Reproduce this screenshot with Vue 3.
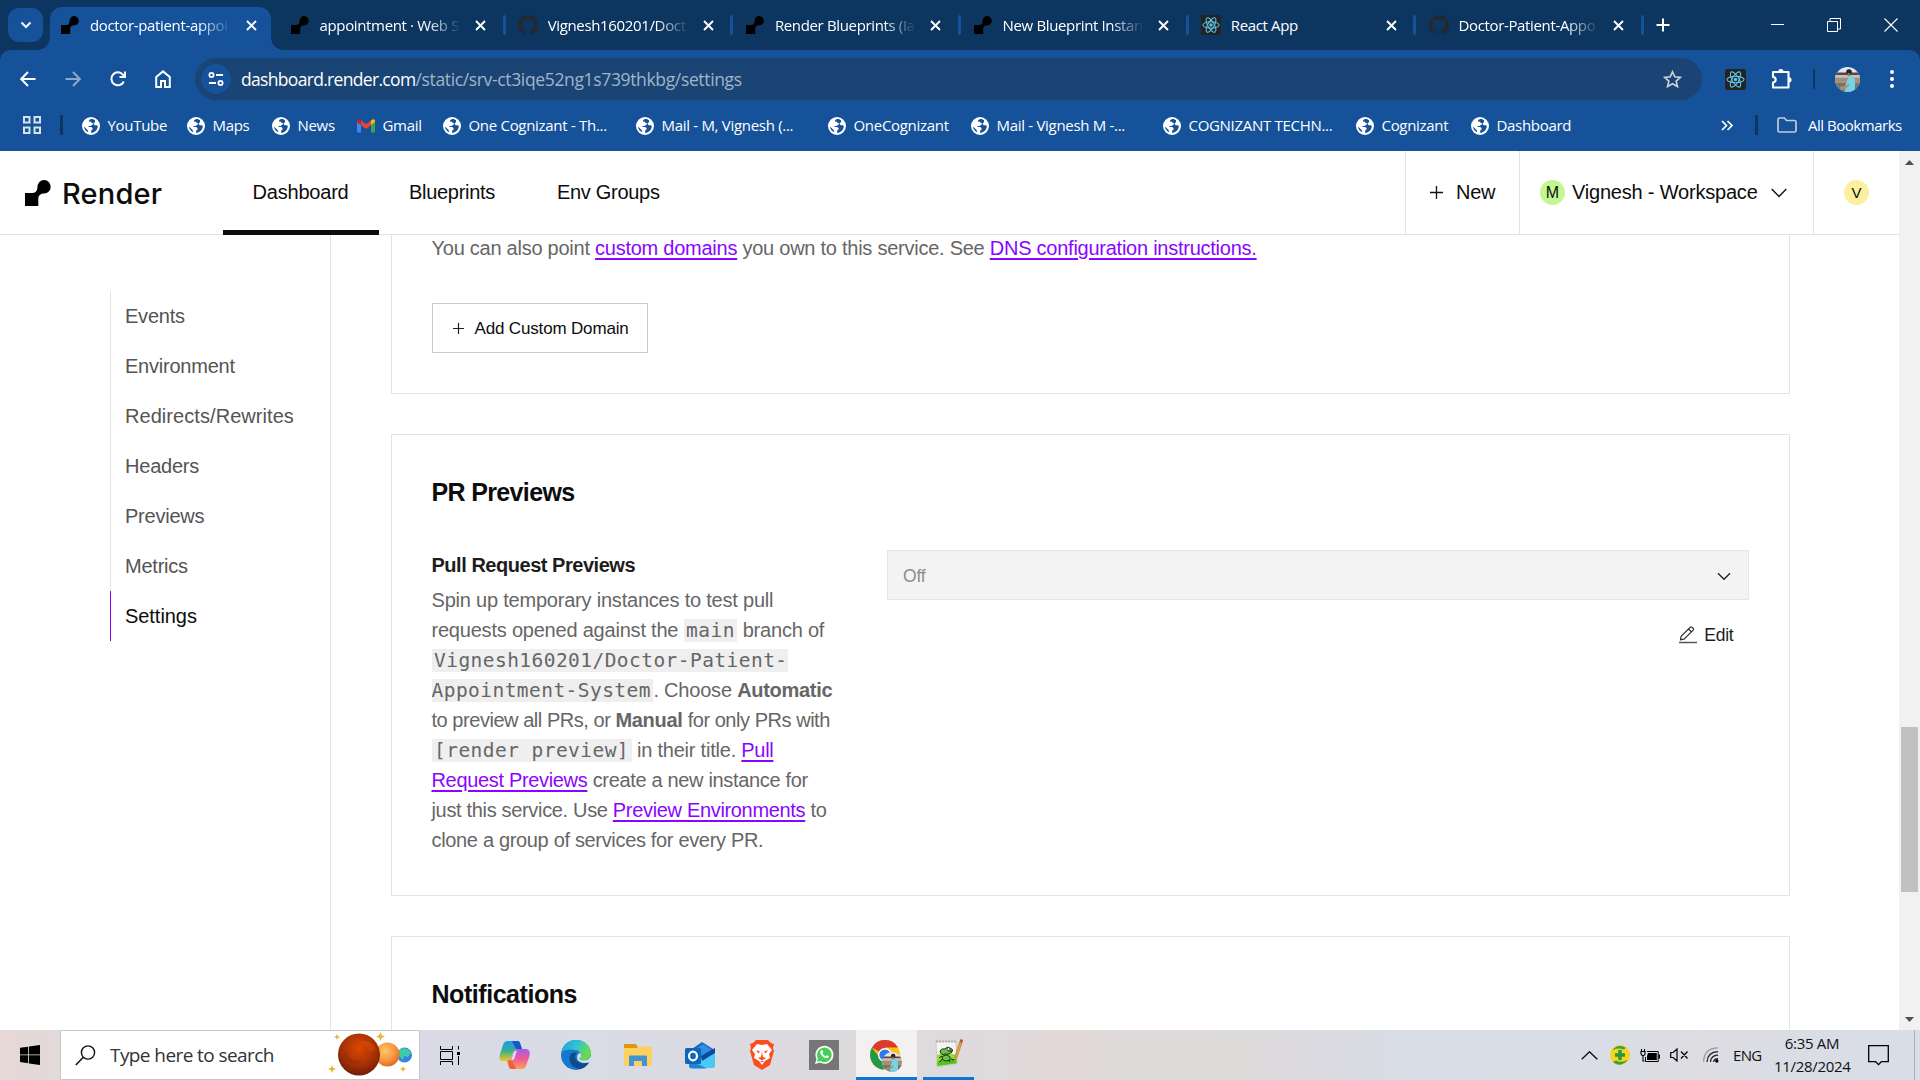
<script setup>
const tabs = [
  { title: 'doctor-patient-appoi', icon: 'render', active: true, fade: true },
  { title: 'appointment · Web S', icon: 'render', fade: true },
  { title: 'Vignesh160201/Doct', icon: 'github', fade: true },
  { title: 'Render Blueprints (Ia', icon: 'render', fade: true },
  { title: 'New Blueprint Instan', icon: 'render', fade: true },
  { title: 'React App', icon: 'react' },
  { title: 'Doctor-Patient-Appo', icon: 'github', fade: true },
]
const bookmarks = [
  { name: 'YouTube', w: 105 },
  { name: 'Maps', w: 85 },
  { name: 'News', w: 85 },
  { name: 'Gmail', w: 86, gmail: true },
  { name: 'One Cognizant - Th...', w: 193 },
  { name: 'Mail - M, Vignesh (...', w: 192 },
  { name: 'OneCognizant', w: 143 },
  { name: 'Mail - Vignesh M -...', w: 192 },
  { name: 'COGNIZANT TECHN...', w: 193 },
  { name: 'Cognizant', w: 115 },
  { name: 'Dashboard', w: 120 },
]
const links = ['Events', 'Environment', 'Redirects/Rewrites', 'Headers', 'Previews', 'Metrics', 'Settings']
</script>

<template>
  <svg class="defs" width="0" height="0">
    <defs>
      <symbol id="render" viewBox="0 0 26 26">
        <path d="M25.6 6.7c.2 3.900-3 6.900-6.900 6.700-2.700 0-5 1.700-5.400 4.300V26H0V12.900h7.500c3.600 0 4.700-2.400 4.900-5.400C12.500 3.200 15.500 0 19.300.1c3.500.1 6.200 3 6.300 6.600z" />
      </symbol>
      <symbol id="github" viewBox="0 0 16 16">
        <path fill="#24292f" d="M8 0C3.580 0 0 3.580 0 8c0 3.540 2.290 6.530 5.470 7.590.4.070.55-.17.55-.38 0-.19-.01-.82-.01-1.490-2.010.37-2.530-.49-2.690-.94-.09-.23-.48-.94-.82-1.130-.28-.15-.68-.52-.01-.53.63-.01 1.080.58 1.230.82.72 1.210 1.870.87 2.330.66.07-.52.28-.87.51-1.070-1.780-.2-3.640-.89-3.640-3.950 0-.87.31-1.590.82-2.150-.08-.2-.36-1.020.08-2.120 0 0 .67-.21 2.200.82.64-.18 1.320-.27 2-.27s1.360.09 2 .27c1.530-1.040 2.200-.82 2.200-.82.44 1.100.16 1.920.08 2.120.51.56.82 1.270.82 2.150 0 3.070-1.870 3.750-3.650 3.950.29.25.54.73.54 1.480 0 1.070-.01 1.930-.01 2.200 0 .21.15.46.55.38A8.010 8.010 0 0 0 16 8c0-4.420-3.580-8-8-8z" />
      </symbol>
      <symbol id="react" viewBox="0 0 22 22">
        <rect width="22" height="22" rx="2.500" fill="#232323" />
        <g fill="none" stroke="#61c9e8" stroke-width="1.100">
          <ellipse cx="11" cy="11" rx="9" ry="3.500" />
          <ellipse cx="11" cy="11" rx="9" ry="3.500" transform="rotate(60 11 11)" />
          <ellipse cx="11" cy="11" rx="9" ry="3.500" transform="rotate(120 11 11)" />
        </g>
        <circle cx="11" cy="11" r="1.800" fill="#61c9e8" />
      </symbol>
      <symbol id="globe" viewBox="0 0 18 18">
        <circle cx="9" cy="9" r="9" fill="#fff" />
        <path fill="#15529a" d="M8.500 2.200c-1 .5-1.700 1.300-1.600 2.300l1.900.2 1.100 1.300c1.600.1 1.500 1.500.2 1.800l-1.400 1.300H6.500v1h2.300c1.400.1 1.900 1.100 1.900 2.200l-1.500 1.200v2.500c3.700-.2 6.600-3.300 6.600-6.900l-1-.9h-2.100l-1.300-1.500 1.600-1.600V3.200c-1.300-.8-3.200-1.300-4.500-1zM2 9.500l3.800 3.700.4 2c-2.300-1-4-3-4.200-5.700z" />
      </symbol>
      <symbol id="face" viewBox="0 0 25 25">
        <clipPath id="faceclip"><circle cx="12.500" cy="12.500" r="12.500" /></clipPath>
        <g clip-path="url(#faceclip)">
          <rect width="25" height="25" fill="#dfe5ee" />
          <path d="M0 5.500h25V8H0z" fill="#5c4444" />
          <path d="M0 8h25v2.500H0z" fill="#c9bfbc" />
          <path d="M0 10.500h25v5H0z" fill="#a58f78" />
          <path d="M0 15.500h25V25H0z" fill="#77756a" />
          <path d="M9.500 25l1-7 3-8 3-1.500 3.500 4L20 25z" fill="#74d3e4" />
          <path d="M5 20l6-1 3-3v3l-4 3-4 1z" fill="#b98b72" />
          <circle cx="14" cy="5" r="2.800" fill="#2b2225" />
          <path d="M12.500 6h2.500v3h-2.500z" fill="#9a6b56" />
        </g>
      </symbol>
      <symbol id="star4" viewBox="0 0 8 8">
        <path fill="#e5b735" d="M4 0l1.200 2.800L8 4 5.200 5.200 4 8 2.800 5.200 0 4l2.800-1.200z" />
      </symbol>
    </defs>
  </svg>

  <div class="screen">
    <header class="strip">
      <button class="tabsearch"><svg width="12" height="8" viewBox="0 0 12 8"><path d="M1.500 1.500L6 6l4.500-4.500" fill="none" stroke="#fff" stroke-width="2" /></svg></button>
      <div v-for="(t, i) in tabs" :key="i" class="tab" :class="{ active: t.active }">
        <svg class="fav" :class="t.icon"><use :href="'#' + t.icon" /></svg>
        <span class="tabtitle" :class="{ fade: t.fade }">{{ t.title }}</span>
        <svg class="x" width="11" height="11" viewBox="0 0 11 11"><path d="M1 1l9 9M10 1l-9 9" stroke="#fff" stroke-width="1.900" /></svg>
      </div>
      <svg class="plus" width="14" height="14" viewBox="0 0 14 14"><path d="M7 .5v13M.5 7h13" stroke="#fff" stroke-width="2" /></svg>
      <div class="winbtns">
        <svg width="14" height="14" viewBox="0 0 14 14"><path d="M1 6.500h13" stroke="#fff" /></svg>
        <svg width="14" height="14" viewBox="0 0 14 14"><path d="M.5 3.500h10v10H.5zM3 3V.5h10.500V11H11" fill="none" stroke="#fff" /></svg>
        <svg width="14" height="14" viewBox="0 0 14 14"><path d="M.5.5l13 13M13.500.5l-13 13" stroke="#fff" stroke-width="1.100" /></svg>
      </div>
    </header>

    <div class="chrome">
      <div class="toolbar">
        <svg class="nav" viewBox="0 0 16 16"><path d="M15.500 8H1.500M8 1L1.200 8 8 15" /></svg>
        <svg class="nav dim" viewBox="0 0 16 16"><path d="M.5 8h14M8 1l6.800 7L8 15" /></svg>
        <svg class="nav" viewBox="0 0 16 16"><path d="M13.800 10.500A6.500 6.500 0 1 1 13.200 4L15 6M15 .5V6H9.500" /></svg>
        <svg class="nav home" viewBox="0 0 16 18"><path d="M1.200 7L8 1.400 14.800 7v10H10v-6H6v6H1.200z" /></svg>
        <div class="omni">
          <span class="site"><svg width="16" height="16" viewBox="0 0 16 16"><g fill="none" stroke="#fff" stroke-width="1.800"><circle cx="3.500" cy="4" r="2.100" /><path d="M8 4h7M1 12h7" /><circle cx="12.500" cy="12" r="2.100" /></g></svg></span>
          <span class="url">dashboard.render.com<i>/static/srv-ct3iqe52ng1s739thkbg/settings</i></span>
          <svg class="star" width="19" height="19" viewBox="0 0 19 19"><path d="M9.500 1.800l2.300 5 5.500.6-4.100 3.700 1.200 5.500-4.900-2.900-4.900 2.900 1.200-5.500L1.700 7.400l5.500-.6z" fill="none" stroke="#c9d1da" stroke-width="1.700" /></svg>
        </div>
        <svg class="ext"><use href="#react" /></svg>
        <svg class="puzzle" width="22" height="22" viewBox="0 0 22 22"><path d="M2 4h15.500v15.500H2v-5c3.600-.6 3.600-5 0-5.600z" fill="none" stroke="#fff" stroke-width="2.100" stroke-linejoin="round" /><path d="M7.300 3.500a2.600 2.600 0 0 1 5.200 0zM18 9.200a2.600 2.600 0 0 1 0 5.200z" fill="#fff" /></svg>
        <span class="vbar"></span>
        <svg class="avatar"><use href="#face" /></svg>
        <svg class="dots" width="4" height="18" viewBox="0 0 4 18"><g fill="#fff"><circle cx="2" cy="2" r="2" /><circle cx="2" cy="9" r="2" /><circle cx="2" cy="16" r="2" /></g></svg>
      </div>
      <div class="bookmarks">
        <svg class="apps" width="18" height="18" viewBox="0 0 18 18"><path d="M1 1h5.500v5.500H1zM11.500 1H17v5.500h-5.500zM1 11.500h5.500V17H1zM11.500 11.500H17V17h-5.500z" fill="none" stroke="#d8e1ec" stroke-width="2" /></svg>
        <span class="vbar b1"></span>
        <div v-for="b in bookmarks" :key="b.name + b.w" class="bm" :style="{ width: b.w + 'px' }">
          <svg v-if="b.gmail" width="18" height="18" viewBox="0 0 18 18"><path d="M0 4v10.500c0 .6.500 1 1 1h3V8z" fill="#4285f4" /><path d="M18 4v10.500c0 .6-.5 1-1 1h-3V8z" fill="#34a853" /><path d="M14 8V3.500l1.500-1C16.500 2 18 2.700 18 4v1z" fill="#fbbc04" /><path d="M4 8V3.500l-1.500-1C1.500 2 0 2.700 0 4v1z" fill="#c5221f" /><path d="M4 3.500v4.700l5 3.700 5-3.700V3.500L9 7.300z" fill="#ea4335" /></svg>
          <svg v-else width="18" height="18"><use href="#globe" /></svg>
          <span>{{ b.name }}</span>
        </div>
        <svg class="more" width="12" height="11" viewBox="0 0 12 11"><path d="M1 1l4.500 4.500L1 10M6.500 1L11 5.500 6.500 10" fill="none" stroke="#fff" stroke-width="1.700" /></svg>
        <span class="vbar b2"></span>
        <svg class="folder" width="20" height="16" viewBox="0 0 20 16"><path d="M1 2.500Q1 1 2.500 1h5l2 2.500h8Q19 3.500 19 5v8.500q0 1.500-1.500 1.500h-15Q1 15 1 13.500z" fill="none" stroke="#c3ccd6" stroke-width="1.700" /></svg>
        <span class="all">All Bookmarks</span>
      </div>
    </div>

    <div class="viewport">
      <div class="page">
        <div class="top">
          <div class="brand"><svg width="26" height="26"><use href="#render" /></svg><span>Render</span></div>
          <nav>
            <a class="on">Dashboard</a><a>Blueprints</a><a>Env Groups</a>
          </nav>
          <div class="new"><svg width="13" height="13" viewBox="0 0 13 13"><path d="M6.500 0v13M0 6.500h13" stroke="#111" stroke-width="1.300" /></svg><span>New</span></div>
          <div class="ws"><b class="m">M</b><span>Vignesh - Workspace</span><svg width="16" height="10" viewBox="0 0 16 10"><path d="M.7 1L8 8.600 15.300 1" fill="none" stroke="#111" stroke-width="1.400" /></svg></div>
          <div class="me"><b>V</b></div>
        </div>
        <div class="body">
          <aside><ul><li v-for="l in links" :key="l" :class="{ cur: l === 'Settings', long: l.length > 15 }">{{ l }}</li></ul></aside>
          <main>
            <section class="domains">
              <p>You can also point <a>custom domains</a> you own to this service. See <a>DNS configuration instructions.</a></p>
              <button class="add"><svg width="11" height="11" viewBox="0 0 11 11"><path d="M5.500 0v11M0 5.500h11" stroke="#222" stroke-width="1.200" /></svg><span>Add Custom Domain</span></button>
            </section>
            <section class="previews">
              <h2 class="pr">PR Previews</h2>
              <div class="cols">
                <div class="desc">
                  <h3>Pull Request Previews</h3>
                  <p>Spin up temporary instances to test pull<br />requests opened against the <code>main</code> branch of<br /><code>Vignesh160201/Doctor-Patient-<br />Appointment-System</code>. Choose <strong>Automatic</strong><br /><span class="tight">to preview all PRs, or <strong>Manual</strong> for only PRs with</span><br /><code>[render preview]</code> in their title. <a class="low">Pull<br />Request Previews</a><span class="low"> create a new instance for<br />just this service. Use <a>Preview Environments</a> to<br />clone a group of services for every PR.</span></p>
                </div>
                <div class="ctl">
                  <div class="select"><span>Off</span><svg width="14" height="9" viewBox="0 0 14 9"><path d="M1 1.200L7 7.200l6-6" fill="none" stroke="#222" stroke-width="1.400" /></svg></div>
                  <div class="edit"><svg width="18" height="18" viewBox="0 0 18 18"><path d="M1.500 13.700l.6-3.500L11.300 1.200q.8-.7 1.600 0l1.300 1.300q.7.800 0 1.600L5 13.200zM9.500 3l3 3" fill="none" stroke="#333" stroke-width="1.200" /><path d="M0 16.500h18" stroke="#555" stroke-width="1.500" /></svg><span>Edit</span></div>
                </div>
              </div>
            </section>
            <section class="notif"><h2>Notifications</h2></section>
          </main>
        </div>
      </div>
      <div class="scroll">
        <svg width="9" height="5" viewBox="0 0 9 5"><path d="M4.500 0L9 5H0z" fill="#505050" /></svg>
        <i></i>
        <svg width="9" height="5" viewBox="0 0 9 5"><path d="M4.500 5L9 0H0z" fill="#505050" /></svg>
      </div>
    </div>

    <footer class="taskbar">
      <div class="start"><svg width="20" height="20" viewBox="0 0 20 20"><path d="M0 2.800l8.200-1.100v7.800H0zM9 1.600L20 0v9.500H9zM0 10.300h8.200v7.900L0 17.100zM9 10.300h11V20L9 18.400z" /></svg></div>
      <div class="search">
        <svg class="glass" width="21" height="21" viewBox="0 0 21 21"><circle cx="13" cy="7.500" r="6.600" fill="none" stroke="#111" stroke-width="1.400" /><path d="M8.300 12.200L.8 20" stroke="#111" stroke-width="1.500" /></svg>
        <span>Type here to search</span>
        <svg class="planets" width="86" height="46" viewBox="0 0 86 46">
          <defs>
            <radialGradient id="p1" cx=".5" cy=".35" r=".7"><stop offset="0" stop-color="#dc4700" /><stop offset=".55" stop-color="#a93205" /><stop offset="1" stop-color="#641a08" /></radialGradient>
            <radialGradient id="p2" cx=".4" cy=".35" r=".7"><stop offset="0" stop-color="#ffc766" /><stop offset=".6" stop-color="#f79440" /><stop offset="1" stop-color="#d9661c" /></radialGradient>
          </defs>
          <circle cx="76.500" cy="23" r="7.500" fill="#3185df" /><path d="M70 19l4-3 6 1 3 4-3 4-4-1-1 4-4-4z" fill="#3fc9a4" />
          <circle cx="59.500" cy="22.500" r="12" fill="url(#p2)" />
          <circle cx="31" cy="22.500" r="21" fill="url(#p1)" />
          <path d="M17 18q3 12 18 11-8 7-19-1z" fill="#8d2705" opacity=".4" /><path d="M30 9q12-2 18 7-5 7-9-1z" fill="#e85a10" opacity=".3" />
          <use href="#star4" x="6" y="2" width="6" height="6" /><use href="#star4" x="48" y="0" width="9" height="9" /><use href="#star4" x="0" y="33" width="8" height="8" /><use href="#star4" x="72" y="34" width="6" height="6" />
        </svg>
      </div>
      <div class="app tv"><svg width="20" height="19" viewBox="0 0 20 19"><path d="M.5 0v3.500h12V0M.5 19v-3.500h12V19M.5 5.500h12v8H.5zM18.500 0v3.500M18.500 10v9" fill="none" stroke="#000" /><path d="M17 6h3v3h-3z" /></svg></div>
      <div class="app"><svg width="31" height="28" viewBox="0 0 31 28">
        <defs>
          <linearGradient id="c1" x1="0" y1="0" x2="0" y2="1"><stop offset="0" stop-color="#1e9df0" /><stop offset=".5" stop-color="#35b08a" /><stop offset="1" stop-color="#f3c722" /></linearGradient>
          <linearGradient id="c2" x1="0" y1="0" x2="0" y2="1"><stop offset="0" stop-color="#a45ee8" /><stop offset=".5" stop-color="#ee5b93" /><stop offset="1" stop-color="#ffa157" /></linearGradient>
        </defs>
        <path d="M9 0h9c3 0 3 2 4 5l1 3h-5c-3 0-4 3-5 6-1 4-2 6-5 6H4c-4 0-4-3-3-7L4 4c1-3 2-4 5-4z" fill="url(#c1)" /><path d="M13 0h5c3 0 3 2 4 5l1 3h-6z" fill="#1757c8" />
        <path d="M22 28h-9c-3 0-3-2-4-6l-.6-2c3-.5 4-3 5-6 1-4 2-6 5-6h8c4 0 5 3 4 7l-3 9c-1 3-2 4-5.400 4z" fill="url(#c2)" /><path d="M13 28c-3 0-3-2-4-6l-.6-2 4-1 5 9z" fill="#f06232" />
        <path d="M15 10.500l3-1-3 9-3 1z" fill="#dfe0ea" />
      </svg></div>
      <div class="app"><svg width="30" height="30" viewBox="0 0 30 30">
        <defs><linearGradient id="e1" x1="0" y1="0" x2="1" y2=".4"><stop offset="0" stop-color="#1e9fe3" /><stop offset=".55" stop-color="#35c4cf" /><stop offset="1" stop-color="#6ddb46" /></linearGradient></defs>
        <circle cx="15" cy="15" r="15" fill="#1679cf" /><path d="M.5 12C2 4 8 0 15 0c9 0 15 6 15 13 0 4-3 7-7 7-3 0-5-1-4.500-2.500 2-3 .5-7-4-7.500C9 9 4 9 .5 12z" fill="url(#e1)" />
        <path d="M10 14c-4 6 0 14 9 15 4-1 8-4 9-7-4 2-9 2-12-1-2-2-2.500-5-.5-8-2-1-4-.5-5.500 1z" fill="#114a8b" /><path d="M18.500 17.500C18 19 20 20.300 23 20.300c3 0 5-1 7-4.300l.5 4-1.500 2c-5 2-11 1-12.500-2.500-1-3 0-5.500 2-6.500 1.500 1 2 3 1 4.500z" fill="#d9dbe5" />
      </svg></div>
      <div class="app"><svg width="28" height="24" viewBox="0 0 28 24"><path d="M0 1h12l1.500 2.500V7H0z" fill="#dd9a08" /><path d="M0 5h13l2-1.500h13V23H0z" fill="#fdd062" /><path d="M5 23V13.500q0-1 1-1h16q1 0 1 1V23h-5v-5h-8v5z" fill="#4693d2" /></svg></div>
      <div class="app"><svg width="30" height="27" viewBox="0 0 30 27"><path d="M4 9L17 0l11 7v12H4z" fill="#1a66b8" /><path d="M9 8l9-6 9 6-12 8z" fill="#2f8fe0" /><path d="M30 9v15q0 2-2 2H7q-3 0-3-3v-4l12-3z" fill="#49c9f7" /><path d="M16 14l14-8v5l-13 8z" fill="#0b4a9f" /><path d="M4 18l18 8.500H7q-3 0-3-3z" fill="#1d86d6" /><rect y="6" width="16" height="16" rx="1.500" fill="#0f67b9" /><ellipse cx="8" cy="14" rx="4" ry="4.300" fill="none" stroke="#fff" stroke-width="2.200" /></svg></div>
      <div class="app"><svg width="26" height="30" viewBox="0 0 26 30"><path d="M7 0h12l3 3 3 1-1 4 1 3-4 14-8 5-8-5L1 11l1-3-1-4 3-1z" fill="#fb4e1c" /><path d="M8 4l5 1 5-1 5 6-3 4 1 4-5 3-3 4-3-4-5-3 1-4-3-4z" fill="#fff" /><path d="M7 10l4 1.500-1.500 2zM19 10l-4 1.500 1.500 2zM13 12l1 5 3 1-4 2.500L9 18l3-1zM11 21l2 1.500 2-1.500" fill="#fb4e1c" /></svg></div>
      <div class="app"><svg width="30" height="30" viewBox="0 0 30 30"><rect width="30" height="30" fill="#767676" /><path d="M6 24l1.500-5A9 9 0 1 1 11 22.600z" fill="#fff" /><path d="M8 22l1-3.500a7.300 7.300 0 1 1 2.500 2.600z" fill="#43d055" /><path d="M12 10.500c1-1 1.800-.2 2.300 1.500l-.8 1.200c.8 1.500 1.700 2.300 3.200 3l1.200-1c2 .8 2.200 1.200 1.500 2.300-1 1-2.600 1-4.500 0-2-1.100-3.900-3.800-3.700-5.200z" fill="#fff" /></svg></div>
      <div class="app big"><svg width="33" height="33" viewBox="0 0 33 33"><circle cx="15" cy="15" r="15" fill="#fbc116" /><path d="M15 15L2 7.500A15 15 0 0 1 28 7.500H15z" fill="#dc3a2e" /><path d="M2 7.500a15 15 0 0 0 11 22.300L21 18l-12-1z" fill="#249a48" /><circle cx="15" cy="15" r="7" fill="#fff" /><circle cx="15" cy="15" r="5.600" fill="#2a79e8" /><use href="#face" x="12" y="12" width="20" height="20" /></svg></div>
      <div class="app npp"><svg width="30" height="29" viewBox="0 0 30 29"><path d="M2 2.500h20l1 22L3 28z" fill="#f4f5f2" stroke="#b5b5b0" stroke-width=".6" /><path d="M3 16q9-4 19 0l.6 8L3.500 27z" fill="#8fdc3a" /><path d="M3.300 22l19-2 .4 4.200L3.500 27z" fill="#54c41c" /><path d="M6 12q2-3 5-2 2-3 5-1 4 1 2 4-3 3-7 2-4 2-5-3zM8 18q4-4 8 0 1 4-4 4-4 0-4-4z" fill="#6fc04b" stroke="#1e3319" stroke-width="1" /><path d="M5 19l3-2M17 20l3 1M14 12h4M8 20l-2 3M15 21l1 2" fill="none" stroke="#17240f" /><circle cx="14.500" cy="10" r="1.500" fill="#eef5e7" stroke="#222" stroke-width=".7" /><path d="M3 1v3M6 1v3M9 1v3M12 1v3M15 1v3M18 1v3M21 1v3" stroke="#999" stroke-width=".8" /><path d="M25.500 3l2.500 1-5 14.500-2 2.500-.3-3z" fill="#e6a32f" stroke="#8a5d22" stroke-width=".4" /><path d="M26.500 0l2.700 1-1 3-2.700-1z" fill="#b5573f" /></svg></div>
      <div class="tray">
        <svg class="up" width="17" height="9" viewBox="0 0 17 9"><path d="M.7 8.300l7.800-7.500 7.800 7.500" fill="none" stroke="#111" stroke-width="1.400" /></svg>
        <svg class="rec" width="20" height="20" viewBox="0 0 20 20"><circle cx="10" cy="10" r="10" fill="#fbd31c" /><path d="M2.500 5.500A9 9 0 0 1 16 3L13.500 4.500Q7 2 2.500 5.500zM17.500 14.500A9 9 0 0 1 3 17l3-1.500q6 3 11.500-1z" fill="#35a544" /><path d="M8.300 5h3.400v3.300H15v3.400h-3.300V15H8.300v-3.300H5V8.300h3.300z" fill="#239845" /></svg>
        <svg class="bat" width="20" height="13" viewBox="0 0 20 13"><path d="M1 2.500h4V5L3.800 6.500H2.200L1 5zM1.500 2.500V0M4.500 2.500V0M3 6.500V12h1.500" fill="none" stroke="#000" stroke-width="1.100" /><path d="M7 2.500h11.200v10H5.500V8" fill="none" stroke="#000" /><path d="M8 4h8.800v7H7V7zM18.500 5.500H20v4h-1.500z" /></svg>
        <svg class="vol" width="18" height="14" viewBox="0 0 18 14"><path d="M.7 4.500h2.500L7 1v12L3.200 9.500H.7zM11 3.500l6.500 7M17.500 3.500l-6.500 7" fill="none" stroke="#000" stroke-width="1.200" /></svg>
        <svg class="wifi" width="16" height="16" viewBox="0 0 16 16"><g fill="none" stroke="#222" stroke-width="1.200"><path d="M.6 15Q1 1 15 .8" stroke="#9a9a9a" /><path d="M4 15Q4.500 5 15 4.600M7.500 15Q8 8.500 15 8.200" /><path d="M10.500 15Q11 12 15 11.700" /></g><circle cx="13.800" cy="14" r="1.700" /></svg>
        <span class="eng">ENG</span>
        <div class="clock"><span>6:35 AM</span><span>11/28/2024</span></div>
        <svg class="note" width="21" height="21" viewBox="0 0 21 21"><path d="M.7.7h19.600v16h-7L10.500 19.600 7.700 16.700h-7z" fill="none" stroke="#000" stroke-width="1.300" /></svg>
        <span class="peek"></span>
      </div>
    </footer>
  </div>
</template>

<style>
body { margin: 0; overflow: hidden; }
</style>
<style scoped>
* { box-sizing: border-box; }
.defs { position: absolute; }
.screen { width: 1920px; height: 1080px; display: flex; flex-direction: column; overflow: hidden; background: #fff; font-family: "Open Sans", "Noto Sans", sans-serif; }
svg { flex: none; display: block; }
button { font: inherit; padding: 0; border: 0; background: none; }

.strip { height: 50px; flex: none; display: flex; background: #0c3560; color: #fff; font-size: 15px; }
.tabsearch { width: 35px; height: 34px; margin: 8px 7px 0 8px; border-radius: 11px; background: #15529a; display: flex; align-items: center; justify-content: center; flex: none; }
.tab { width: 227.700px; height: 50px; flex: none; display: flex; align-items: center; position: relative; padding-left: 12px; }
.tab:not(.active)::after { content: ""; position: absolute; right: -1px; top: 15px; width: 3px; height: 20px; border-radius: 2px; background: #15529a; }
.tab.active { width: 221px; margin-right: 6px; margin-top: 7px; height: 43px; padding-left: 11px; padding-bottom: 7px; background: #15529a; border-radius: 12px 12px 0 0; }
.tab.active::before, .tab.active::after { content: ""; position: absolute; bottom: 0; width: 12px; height: 12px; }
.tab.active::before { left: -12px; background: radial-gradient(circle at 0 0, transparent 11.500px, #15529a 12px); }
.tab.active::after { right: -12px; background: radial-gradient(circle at 100% 0, transparent 11.500px, #15529a 12px); }
.fav { width: 20px; height: 20px; margin-right: 9.500px; }
.fav.render { width: 18px; height: 18px; margin-right: 11px; }
.tab:not(.active) .fav { margin-left: 1.500px; }
.tabtitle { width: 141px; flex: none; white-space: nowrap; letter-spacing: -.35px; line-height: 24px; }
.fade { -webkit-mask: linear-gradient(90deg, #000 108px, transparent 141px); mask: linear-gradient(90deg, #000 108px, transparent 141px); }
.x { margin-left: 14.500px; }
.github ~ .x, .react ~ .x { margin-left: 14px; }
.active .x { margin-left: 15px; }
.plus { margin: 18px 0 0 13px; }
.winbtns { margin: 18px 22px 0 auto; display: flex; gap: 43px; }

.chrome { height: 101px; flex: none; background: #15529a; position: relative; color: #fff; }
.chrome::before, .chrome::after { content: ""; position: absolute; top: 0; width: 10px; height: 10px; }
.chrome::before { left: 0; background: radial-gradient(circle at 100% 100%, transparent 9.500px, #0c3560 10px); }
.chrome::after { right: 0; background: radial-gradient(circle at 0 100%, transparent 9.500px, #0c3560 10px); }
.toolbar { height: 50px; display: flex; align-items: center; padding: 8px 0 0 19.500px; }
.nav { width: 16px; height: 16px; margin-right: 29px; fill: none; stroke: #fff; stroke-width: 2; }
.nav.home { height: 18px; margin-right: 24.500px; }
.dim { opacity: .5; }
.omni { width: 1507px; height: 42px; border-radius: 21px; background: #194473; display: flex; align-items: center; padding-left: 6px; flex: none; }
.site { width: 30px; height: 30px; border-radius: 50%; background: #15529a; display: flex; align-items: center; justify-content: center; }
.url { margin-left: 10px; font-size: 17.500px; letter-spacing: -.68px; white-space: nowrap; }
.url i { font-style: normal; color: #a3b4c7; letter-spacing: -.35px; }
.star { margin: 0 20px 0 auto; }
.ext { width: 21px; height: 21px; margin-left: 23px; }
.puzzle { margin-left: 24.500px; }
.vbar { width: 2px; height: 20px; background: #0c3560; flex: none; border-radius: 1px; }
.toolbar .vbar { margin-left: 20.500px; }
.avatar { width: 25px; height: 25px; margin-left: 20px; }
.dots { margin-left: 30px; }
.bookmarks { height: 50px; display: flex; align-items: center; padding-left: 23px; font-size: 15px; letter-spacing: -.3px; white-space: nowrap; }
.b1 { margin: 0 19px 0 18.500px; width: 3px; }
.bm { display: flex; align-items: center; gap: 8px; flex: none; padding-top: 1px; }
.bm span { margin-top: -2px; }
.more { margin-left: 130.500px; }
.b2 { margin: 0 19px 0 22px; width: 3px; }
.folder { margin-right: 11px; }
.all { letter-spacing: -.48px; }

.viewport { height: 879px; flex: none; display: flex; font-family: "Liberation Sans", Arial, sans-serif; }
.page { width: 1899px; display: flex; flex-direction: column; overflow: hidden; }
.top { height: 84px; flex: none; border-bottom: 1px solid #e3e3e3; display: flex; font-size: 20px; color: #0d0d0d; letter-spacing: -.3px; white-space: nowrap; }
.brand { width: 223px; padding: 0 0 0 25px; display: flex; align-items: center; gap: 11px; font: 500 29px Inter, sans-serif; letter-spacing: .2px; }
.brand span { padding-top: 2px; }
nav { display: flex; }
nav a { display: flex; align-items: center; padding: 0 30px 2px; height: 84px; width: 156px; }
nav a:nth-child(2) { width: 148px; }
nav a.on { border-bottom: 5px solid #0d0d0d; padding: 3px 0 0 29.500px; letter-spacing: -.2px; }
.new { margin-left: auto; width: 114px; border-left: 1px solid #e3e3e3; display: flex; align-items: center; padding-left: 24px; gap: 13px; }
.ws { width: 294px; border-left: 1px solid #e3e3e3; display: flex; align-items: center; padding-left: 20px; }
.ws span { width: 199px; letter-spacing: -.2px; }
.ws b, .me b { width: 25px; height: 25px; border-radius: 50%; background: #c3f792; display: flex; align-items: center; justify-content: center; font-size: 16px; font-weight: 400; margin-right: 7px; letter-spacing: 0; }
.me { width: 86px; border-left: 1px solid #e3e3e3; display: flex; align-items: center; padding-left: 30px; }
.me b { background: #faf09d; font-size: 15px; }
.body { display: flex; height: 795px; overflow: hidden; }
aside { width: 331px; border-right: 1px solid #e3e3e3; padding: 56px 0 0 110px; font-size: 20px; letter-spacing: -.22px; color: #545454; flex: none; }
ul { list-style: none; margin: 0; padding: 0; }
li { height: 50px; border-left: 1px solid #e3e3e3; padding-left: 14px; line-height: 51px; }
li.long { letter-spacing: .06px; }
li.cur { border-color: #8a05ff; color: #0d0d0d; letter-spacing: -.05px; }
main { width: 1399px; margin-left: 60px; font-size: 20px; line-height: 30px; color: #666; letter-spacing: -.21px; }
section { border: 1px solid #e3e3e3; padding: 0 40px 0 39.500px; margin-bottom: 40px; }
.domains { height: 159px; border-top: 0; overflow: hidden; }
p { margin: 0; white-space: nowrap; }
main a { color: #8a05ff; text-decoration: underline; text-decoration-thickness: 2px; text-underline-offset: 3px; }
.domains p { margin-bottom: 40px; margin-top: -2px; letter-spacing: -.25px; }
.add { width: 216px; height: 50px; border: 1px solid #c9c9c9; display: flex; align-items: center; padding: 1px 0 0 20px; gap: 11px; font-size: 17px; color: #0d0d0d; white-space: nowrap; letter-spacing: -.16px; }
.previews { height: 462px; }
h2 { margin: 0; font-size: 25px; font-weight: 700; letter-spacing: -.45px; color: #0d0d0d; padding-top: 42px; line-height: 30px; }
.pr { letter-spacing: -.65px; }
.cols { display: flex; margin-top: 43px; }
.desc { width: 455.500px; }
h3 { margin: 0 0 5px; font-size: 20px; font-weight: 700; line-height: 30px; color: #1d1d1d; letter-spacing: -.47px; }
strong { letter-spacing: -.3px; }
.tight { letter-spacing: -.46px; }
.low { letter-spacing: -.33px; }
code { font: 19.500px "DejaVu Sans Mono", monospace; letter-spacing: .45px; background: #efefef; padding: 0 2.500px; }
.ctl { width: 862px; }
.select { height: 50px; background: #f3f3f3; border: 1px solid #e6e6e6; display: flex; align-items: center; justify-content: space-between; padding: 2px 17px 0 15px; font-size: 17.500px; color: #8d8d8d; }
.edit { display: flex; align-items: center; justify-content: flex-end; gap: 7px; padding-right: 15.500px; margin-top: 19px; font-size: 17.500px; color: #1d1d1d; }
.edit span { margin-top: 1px; }
.notif { height: 200px; }
.scroll { width: 21px; background: #f1f1f1; display: flex; flex-direction: column; align-items: center; padding: 9px 0 8px; }
.scroll i { width: 17px; height: 165px; background: #c1c1c1; margin: 562px 0 auto; }

.taskbar { height: 50px; display: flex; align-items: stretch; background: linear-gradient(90deg, #e6d8d5 0, #e2d9da 60px, #d9dae5 430px, #d9dbe5 600px, #dddade 850px, #dfdadc 1000px, #e3d8d7 1065px, #dedad9 1110px, #dddada 1240px, #dbdae0 1320px, #d8dde7 1420px, #d9dde6 1560px, #dddde2 1700px, #d8dde8 1920px); color: #111; }
.start { width: 60px; display: flex; align-items: center; justify-content: center; }
.search { width: 360px; background: #fff; border: 1px solid #c8c8cc; display: flex; align-items: center; padding-left: 14px; font-size: 19px; color: #333; white-space: nowrap; }
.search span { width: 218px; margin-left: 14px; letter-spacing: -.58px; }
.app { width: 62px; display: flex; align-items: center; justify-content: center; }
.tv { width: 60px; margin-right: 3px; }
.big { background: #f3f0f1; border-bottom: 3px solid #0878d4; width: 61px; padding-top: 5px; margin-left: 1px; }
.npp { width: 51px; margin-left: 6px; border-bottom: 3px solid #0878d4; }
.tray { margin-left: auto; display: flex; align-items: center; }
.rec { margin-left: 12px; }
.bat { margin-left: 10px; }
.vol { margin-left: 10px; }
.wifi { margin-left: 15px; }
.eng { margin-left: 14px; font-size: 15px; width: 29px; letter-spacing: -.7px; }
.clock { width: 76px; margin: 0 18px 0 12px; font-size: 15px; line-height: 23px; text-align: center; letter-spacing: -.3px; display: flex; flex-direction: column; white-space: nowrap; }
.peek { width: 6px; height: 50px; margin-left: 25px; border-left: 1px solid #a9adb7; }
</style>
